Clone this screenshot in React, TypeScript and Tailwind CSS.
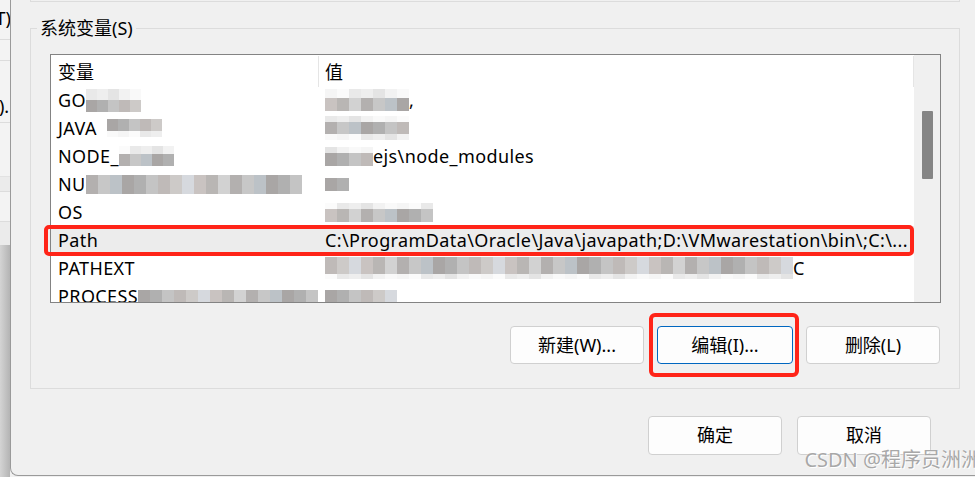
import type { ReactNode } from "react";

const GRAYS = [
  "#c9c3c1", "#bcc2c7", "#cdcac8", "#b3b0af", "#c4c4c4", "#b9b6b4",
  "#a9a6a5", "#d6d9de", "#c7c7c7", "#bfbab8", "#d2d2d2", "#b0b0b0",
];
const LIGHTS = ["#f5f5f5", "#eeeeee", "#f9f9f9", "#e9e9e9", "#f2f2f2", "#fbfbfb", "#e4e4e4"];

type Band = { h: number; light?: boolean };

// pixelated (blurred-out) part of the screenshot
function Mosaic({ cols, size, bands, seed = 0 }: { cols: number; size: number; bands: Band[]; seed?: number }) {
  return (
    <span className="inline-flex shrink-0 flex-col">
      {bands.map((band, b) => {
        const palette = band.light ? LIGHTS : GRAYS;
        return (
          <span key={b} className="flex" style={{ height: band.h }}>
            {Array.from({ length: cols }).map((_, i) => (
              <span
                key={i}
                className="h-full shrink-0"
                style={{ width: size, backgroundColor: palette[(i * 5 + (seed + b) * 3) % palette.length] }}
              />
            ))}
          </span>
        );
      })}
    </span>
  );
}

function Row({ name, value, selected }: { name: ReactNode; value: ReactNode; selected?: boolean }) {
  return (
    <div className={`flex h-[28px] shrink-0 leading-[28px] tracking-[0.4px] ${selected ? "bg-[#ececec]" : ""}`}>
      <div className="flex w-[268px] shrink-0 items-center overflow-hidden whitespace-nowrap pl-[7px]">{name}</div>
      <div className="flex min-w-0 flex-1 items-center overflow-hidden whitespace-nowrap pl-[6px]">{value}</div>
    </div>
  );
}

function WinButton({ children, focused, tall }: { children: ReactNode; focused?: boolean; tall?: boolean }) {
  return (
    <div
      className={`flex items-center justify-center rounded-[4px] border bg-[#fdfdfd] ${tall ? "h-[39px]" : "h-[38px]"} ${
        focused ? "w-[136px] border-[#0067c0]" : "w-[134px] border-[#d0d0d0]"
      }`}
    >
      {children}
    </div>
  );
}

export default function App() {
  return (
    <div className="flex h-[477px] w-[975px] overflow-hidden bg-[#f0f0f0] font-['Noto_Sans','Noto_Sans_CJK_SC',sans-serif] text-[18px] text-black">
      {/* window behind the dialog */}
      <div className="flex h-full w-[10px] shrink-0 flex-col overflow-hidden">
        <div className="h-[245px] shrink-0 bg-[#f3f3f3]">
          <div className="flex h-[40px] justify-end border-b border-[#dcdcdc] pt-[6px] leading-[24px] whitespace-nowrap">
            <span className="-mr-[1px]">(T)</span>
          </div>
          <div className="h-[21px] border-b border-[#dcdcdc]" />
          <div className="flex h-[62px] items-end justify-end border-b border-[#dcdcdc] pb-[4px] leading-[24px] whitespace-nowrap">
            <span className="-mr-[4px]">(O)..</span>
          </div>
          <div className="h-[54px] border-b border-[#e2e2e2]" />
          <div className="h-[15px] border-b border-[#dcdcdc] bg-[#ebebeb]" />
          <div className="h-[30px] border-b border-[#dcdcdc]" />
          <div className="h-[23px] bg-[#ebebeb]" />
        </div>
        <div className="flex-1 bg-gradient-to-r from-[#d4d4d4] to-[#b4b4b4]" />
      </div>

      {/* dialog */}
      <div className="relative flex h-[476px] flex-1 flex-col rounded-bl-[8px] border-b border-l border-[#9a9a9a] bg-[#f0f0f0]">
        {/* bottom of the user variables group */}
        <div className="ml-[19px] h-[2px] w-[930px] border-x border-b border-[#dcdcdc]" />

        {/* system variables group */}
        <div className="relative ml-[19px] mt-[26px] h-[361px] w-[930px] border border-[#dcdcdc] pl-[19px] pr-[18px] pt-[25px]">
          <span className="absolute -top-[13px] left-[6px] bg-[#f0f0f0] px-[3px] leading-[24px]">系统变量(S)</span>

          <div className="relative">
            <div className="flex h-[249px] border border-[#838383] bg-white">
              <div className="relative flex flex-1 flex-col overflow-hidden">
                {/* header */}
                <div className="flex h-[31px] shrink-0 pt-[3px] leading-[28px]">
                  <div className="w-[267px] shrink-0 pl-[7px]">变量</div>
                  <div className="-mt-[2px] h-[31px] w-px bg-[#e5e5e5]" />
                  <div className="flex-1 pl-[6px]">值</div>
                  <div className="-mt-[2px] h-[31px] w-px bg-[#e5e5e5]" />
                </div>
                <Row
                  name={<>GO<Mosaic cols={5} size={11} bands={[{ h: 11, light: true }, { h: 12 }]} seed={1} /></>}
                  value={<><Mosaic cols={7} size={12} bands={[{ h: 9, light: true }, { h: 13 }]} seed={7} />,</>}
                />
                <Row
                  name={<>JAVA<span className="w-[10px]" /><Mosaic cols={5} size={11} bands={[{ h: 12 }, { h: 6, light: true }]} seed={2} /></>}
                  value={<Mosaic cols={7} size={12} bands={[{ h: 6, light: true }, { h: 12 }, { h: 6, light: true }]} seed={8} />}
                />
                <Row
                  name={<>NODE_<Mosaic cols={5} size={11} bands={[{ h: 8, light: true }, { h: 12 }]} seed={4} /></>}
                  value={<><Mosaic cols={4} size={12} bands={[{ h: 6, light: true }, { h: 13 }]} seed={9} />ejs\node_modules</>}
                />
                <Row
                  name={<>NU<Mosaic cols={18} size={12} bands={[{ h: 19 }]} seed={5} /></>}
                  value={<Mosaic cols={2} size={12} bands={[{ h: 13 }]} seed={10} />}
                />
                <Row
                  name="OS"
                  value={<Mosaic cols={9} size={12} bands={[{ h: 6, light: true }, { h: 13 }]} seed={11} />}
                />
                <Row
                  name="Path"
                  value="C:\ProgramData\Oracle\Java\javapath;D:\VMwarestation\bin\;C:\..."
                  selected
                />
                <Row
                  name="PATHEXT"
                  value={<><Mosaic cols={39} size={12} bands={[{ h: 17 }, { h: 5, light: true }]} seed={3} />C</>}
                />
                <Row
                  name={<>PROCESS<Mosaic cols={15} size={12} bands={[{ h: 12 }]} seed={6} /></>}
                  value={<Mosaic cols={6} size={12} bands={[{ h: 12 }]} seed={2} />}
                />
              </div>

              {/* scrollbar */}
              <div className="flex w-[26px] shrink-0 justify-center bg-[#f0f0f0] pt-[56px]">
                <div className="h-[68px] w-[11px] rounded-[1px] bg-[#858585]" />
              </div>
            </div>

            {/* red mark around the Path row */}
            <div className="absolute -left-[6px] top-[171px] h-[31px] w-[870px] rounded-[5px] border-[4px] border-[#ff2418]" />
          </div>

          <div className="mt-[23px] flex justify-end gap-[13px] pr-[1px]">
            <WinButton>新建(W)...</WinButton>
            <div className="relative">
              <WinButton focused>编辑(I)...</WinButton>
              <div className="absolute -left-[8px] -top-[13px] h-[64px] w-[150px] rounded-[6px] border-[4px] border-[#ff2418]" />
            </div>
            <WinButton>删除(L)</WinButton>
          </div>
        </div>

        <div className="mr-[44px] mt-[27px] flex justify-end gap-[15px]">
          <WinButton tall>确定</WinButton>
          <WinButton tall>取消</WinButton>
        </div>

        {/* watermark */}
        <div className="absolute -right-[6px] bottom-[4px] whitespace-nowrap text-[20px] leading-[22px] text-[#a8a8a8] [text-shadow:0_0_1px_#ffffff,1px_1px_0_#ffffff]">
          CSDN @程序员洲洲
        </div>
      </div>
    </div>
  );
}
